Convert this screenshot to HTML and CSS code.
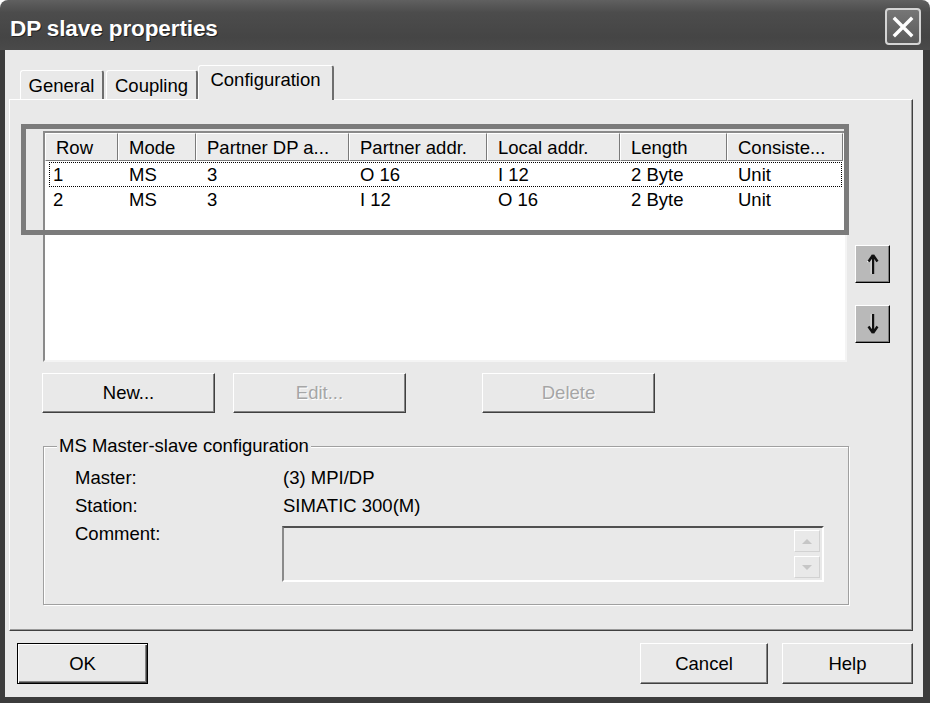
FILE: index.html
```
<!DOCTYPE html>
<html>
<head>
<meta charset="utf-8">
<link rel="stylesheet" href="styles.css">
</head>
<body>
<div class="window">
  <div class="titlebar">
    <span class="title">DP slave properties</span>
    <button class="close" aria-label="Close">
      <svg width="22" height="22" viewBox="0 0 22 22"><path d="M3 3L19 19M19 3L3 19" stroke="#fff" stroke-width="3.4" stroke-linecap="square"/></svg>
    </button>
  </div>
  <div class="frame">
    <div class="tabs">
      <div class="tab tab-general">General</div>
      <div class="tab tab-coupling">Coupling</div>
      <div class="tab tab-active">Configuration</div>
    </div>
    <div class="pane">
      <div class="list-area">
        <div class="listview">
          <div class="lv-head">
            <div class="hc">Row</div>
            <div class="hc">Mode</div>
            <div class="hc">Partner DP a...</div>
            <div class="hc">Partner addr.</div>
            <div class="hc">Local addr.</div>
            <div class="hc">Length</div>
            <div class="hc">Consiste...</div>
          </div>
          <div class="lv-row focused">
            <div class="rc first">1</div>
            <div class="rc">MS</div>
            <div class="rc">3</div>
            <div class="rc">O 16</div>
            <div class="rc">I 12</div>
            <div class="rc">2 Byte</div>
            <div class="rc">Unit</div>
          </div>
          <div class="lv-row">
            <div class="rc first">2</div>
            <div class="rc">MS</div>
            <div class="rc">3</div>
            <div class="rc">I 12</div>
            <div class="rc">O 16</div>
            <div class="rc">2 Byte</div>
            <div class="rc">Unit</div>
          </div>
        </div>
        <div class="arrows">
          <button class="arrow-btn" aria-label="Up">
            <svg width="14" height="24" viewBox="0 0 14 24"><path d="M5.4 4.5V22M5.4 4.5L1.4 10" stroke="#fff" stroke-width="1.2" fill="none"/><path d="M7 3V22M7 3L2.5 9.5M7 3L11.5 9.5" stroke="#111" stroke-width="2.4" fill="none"/></svg>
          </button>
          <button class="arrow-btn" aria-label="Down">
            <svg width="14" height="24" viewBox="0 0 14 24"><path d="M5.4 2V19.5" stroke="#fff" stroke-width="1.2" fill="none"/><path d="M7 2V21M7 21L2.5 14.5M7 21L11.5 14.5" stroke="#111" stroke-width="2.4" fill="none"/></svg>
          </button>
        </div>
        <div class="highlight"></div>
      </div>
      <div class="btn-row">
        <button class="btn">New...</button>
        <button class="btn disabled">Edit...</button>
        <button class="btn disabled btn-delete">Delete</button>
      </div>
      <div class="group">
        <span class="group-label">MS Master-slave configuration</span>
        <div class="group-grid">
          <div>Master:</div>
          <div class="val">(3) MPI/DP</div>
          <div>Station:</div>
          <div class="val">SIMATIC 300(M)</div>
          <div>Comment:</div>
          <div class="comment">
            <span class="spin"><svg width="12" height="7" viewBox="0 0 12 7"><path d="M1 6L6 1L11 6Z" fill="#c6c6c6"/></svg></span>
            <span class="spin"><svg width="12" height="7" viewBox="0 0 12 7"><path d="M1 1L6 6L11 1Z" fill="#c6c6c6"/></svg></span>
          </div>
        </div>
      </div>
    </div>
    <div class="bottom-row">
      <button class="btn btn-ok">OK</button>
      <button class="btn btn-cancel">Cancel</button>
      <button class="btn btn-help">Help</button>
    </div>
  </div>
</div>
</body>
</html>
```
FILE: styles.css
```
* { box-sizing: border-box; }
body {
  margin: 0;
  background: #fff;
  font-family: "Liberation Sans", Arial, sans-serif;
  font-size: 18.5px;
  color: #000;
}
.window {
  width: 930px;
  height: 703px;
  display: flex;
  flex-direction: column;
}
.titlebar {
  height: 50px;
  flex: none;
  display: flex;
  align-items: flex-start;
  justify-content: space-between;
  background: linear-gradient(#606060, #4c4c4c 25%, #454545 75%, #4a4a4a);
  border-radius: 8px 8px 0 0;
  padding: 0 9px 0 10px;
}
.title {
  margin-top: 15px;
  color: #fff;
  font-weight: bold;
  font-size: 22.5px;
  line-height: 28px;
  letter-spacing: -0.1px;
  text-shadow: 1px 1px 0 #222;
}
.close {
  width: 36px;
  height: 37px;
  margin-top: 8px;
  padding: 0;
  border: 2px solid #d4d4d4;
  border-radius: 4px;
  background: linear-gradient(#767676, #5a5a5a);
  display: flex;
  align-items: center;
  justify-content: center;
}
.frame {
  flex: 1;
  background: #e9e9e9;
  border-style: solid;
  border-color: #3c3c3c;
  border-width: 0 7px 6px 5px;
  padding: 15px 0 0 4px;
  display: flex;
  flex-direction: column;
}
.tabs {
  display: flex;
  align-items: flex-end;
  height: 35px;
  margin-left: 11px;
  margin-bottom: -1px;
  position: relative;
  z-index: 1;
}
.tab {
  height: 29px;
  margin-bottom: 1px;
  display: flex;
  align-items: center;
  justify-content: center;
  background: #e9e9e9;
  border-top: 1px solid #fff;
  border-left: 1px solid #fff;
  border-right: 2px solid #6e6e6e;
  border-radius: 3px 3px 0 0;
  white-space: nowrap;
  padding-top: 2px;
}
.tab-general { width: 84px; }
.tab-coupling { width: 92px; margin-left: 2px; }
.tab-active {
  width: 136px;
  height: 35px;
  margin-bottom: 0;
  padding-top: 0;
  padding-bottom: 6px;
}
.pane {
  width: 904px;
  height: 532px;
  border: 1px solid;
  border-color: #fff #404040 #404040 #fff;
  box-shadow: inset -1px -1px 0 #9a9a9a;
  padding: 31px 0 0 33px;
}
.list-area {
  display: flex;
  position: relative;
}
.listview {
  width: 804px;
  height: 231px;
  background: #fff;
  border: 2px solid;
  border-color: #8a8a8a #f4f4f4 #f4f4f4 #8a8a8a;
}
.lv-head, .lv-row {
  display: grid;
  grid-template-columns: 73px 78px 153px 138px 133px 107px 116px;
}
.lv-head { height: 28px; }
.hc {
  background: #ebebeb;
  border: 1px solid;
  border-color: #fff #7a7a7a #7a7a7a #fff;
  padding: 2px 0 0 10px;
  line-height: 24px;
  white-space: nowrap;
  overflow: hidden;
}
.lv-row {
  position: relative;
  height: 25px;
  line-height: 26px;
  margin-top: 1px;
}
.lv-row + .lv-row { margin-top: 0; }
.rc {
  padding-left: 11px;
  white-space: nowrap;
}
.rc.first { padding-left: 8px; }
.focused::before {
  content: "";
  position: absolute;
  top: 0;
  bottom: 0;
  left: 4px;
  right: 3px;
  border: 1px dotted #000;
}
.arrows {
  display: flex;
  flex-direction: column;
  gap: 22px;
  margin-left: 8px;
  padding-top: 114px;
}
.arrow-btn {
  width: 35px;
  height: 38px;
  padding: 0;
  background: #b9b9b9;
  border: 1px solid;
  border-color: #fff #000 #000 #fff;
  box-shadow: inset -1px -1px 0 #7a7a7a;
  display: flex;
  align-items: center;
  justify-content: center;
}
.highlight {
  position: absolute;
  left: -22px;
  top: -7px;
  width: 828px;
  height: 111px;
  border: 5px solid #7b7b7b;
  pointer-events: none;
}
.btn {
  font: inherit;
  color: #000;
  background: #e9e9e9;
  border: 1px solid;
  border-color: #fff #404040 #404040 #fff;
  box-shadow: inset -1px -1px 0 #858585;
  padding: 0;
}
.btn-row {
  display: flex;
  margin-top: 11px;
  margin-left: -1px;
}
.btn-row .btn {
  width: 173px;
  height: 40px;
}
.btn-row .btn + .btn { margin-left: 18px; }
.btn-row .btn + .btn.btn-delete { margin-left: 76px; }
.disabled {
  color: #a6a6a6;
  text-shadow: 1px 1px 0 #fff;
}
.group {
  position: relative;
  width: 806px;
  height: 159px;
  margin-top: 33px;
  border: 1px solid #a0a0a0;
  box-shadow: 1px 1px 0 #fff, inset 1px 1px 0 #fff;
  padding: 17px 0 0 31px;
}
.group-label {
  position: absolute;
  top: -12px;
  left: 13px;
  padding: 0 2px;
  background: #e9e9e9;
  line-height: 22px;
}
.group-grid {
  display: grid;
  grid-template-columns: 207px 542px;
  grid-auto-rows: 28px;
  line-height: 28px;
}
.val { padding-left: 1px; }
.comment {
  margin-top: 6px;
  width: 542px;
  height: 56px;
  border: 2px solid;
  border-color: #505050 #fff #fff #8a8a8a;
  background: #e9e9e9;
  display: flex;
  flex-direction: column;
  align-items: flex-end;
  gap: 4px;
  padding: 2px 2px 0 0;
}
.spin {
  width: 26px;
  height: 22px;
  border: 1px solid;
  border-color: #fff #d2d2d2 #d2d2d2 #fff;
  display: flex;
  align-items: center;
  justify-content: center;
}
.bottom-row {
  display: flex;
  margin-top: 12px;
  margin-left: 8px;
  margin-right: 10px;
}
.bottom-row .btn { height: 41px; }
.btn-ok {
  width: 131px;
  border: 1px solid #000;
  box-shadow: inset 1px 1px 0 #fff, inset -1px -1px 0 #404040, inset -2px -2px 0 #858585;
}
.btn-cancel { width: 128px; margin-left: auto; }
.btn-help { width: 131px; margin-left: 14px; }
```
